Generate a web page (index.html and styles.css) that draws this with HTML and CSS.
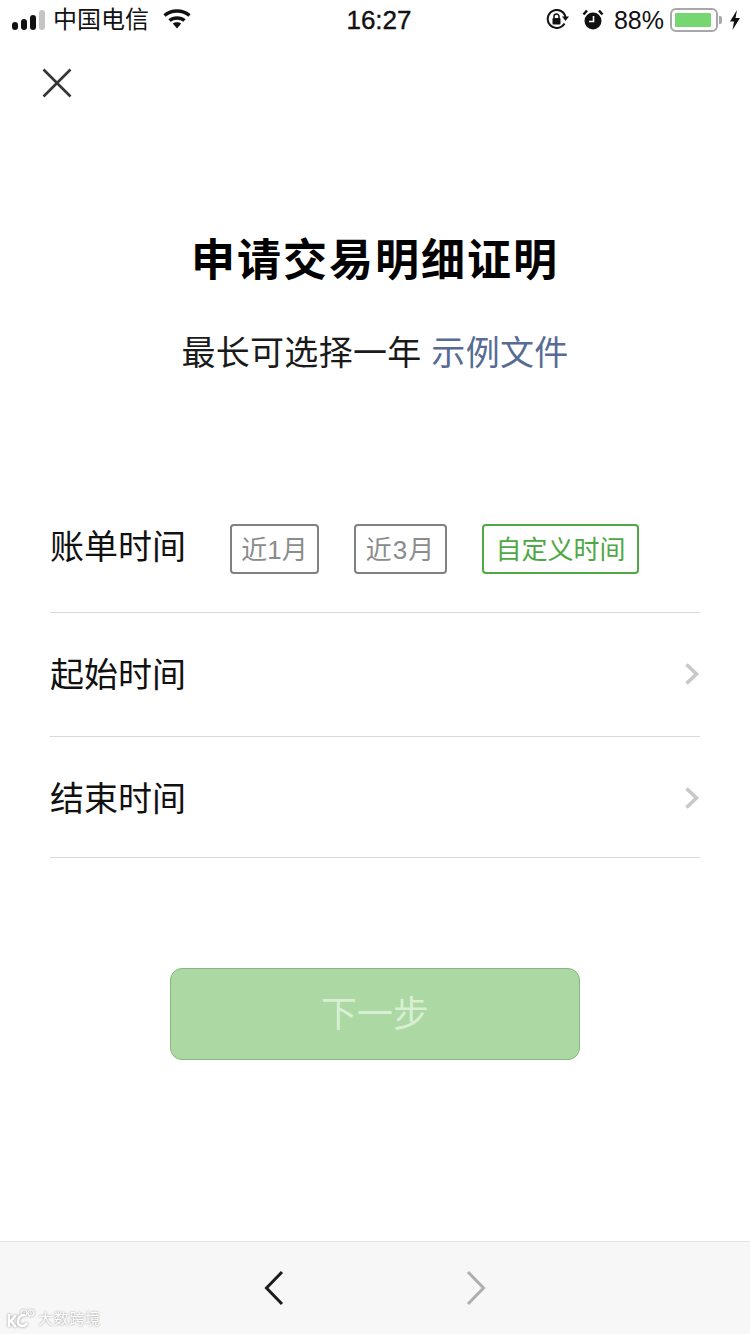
FILE: index.html
```html
<!DOCTYPE html>
<html lang="zh-CN">
<head>
<meta charset="utf-8">
<title>申请交易明细证明</title>
<link rel="stylesheet" href="styles.css">
</head>
<body>
<div class="page">
  <header class="status">
    <div class="status-side">
      <svg class="signal" width="34" height="20" viewBox="0 0 34 20"><rect x="0" y="12" width="6" height="8" rx="3" fill="#111"/><rect x="9" y="9" width="6" height="11" rx="3" fill="#111"/><rect x="18" y="5" width="6" height="15" rx="3" fill="#111"/><rect x="27" y="0" width="6" height="20" rx="3" fill="#c4c4c4"/></svg>
      <span class="carrier">中国电信</span>
      <svg class="wifi" width="28" height="20" viewBox="0 0 28 20"><path d="M1.5 6.5C8.500 .5 19.500 .5 26.500 6.500" fill="none" stroke="#111" stroke-width="3.500"/><path d="M6.500 11.500C10.500 8 17.500 8 21.500 11.500" fill="none" stroke="#111" stroke-width="3.500"/><path d="M9.800 14.500C12 12.800 16 12.800 18.200 14.500L14 19.500Z" fill="#111"/></svg>
    </div>
    <div class="clock">16:27</div>
    <div class="status-side status-right">
      <svg width="24" height="22" viewBox="0 0 24 22"><path d="M18.500 14.500A9 9 0 1 1 19.500 8" fill="none" stroke="#111" stroke-width="2"/><path d="M16 7.500h7l-3.500 4.500z" fill="#111"/><rect x="6.500" y="9" width="8" height="6.500" rx="1" fill="#111"/><path d="M8 9.500V7.500a2.500 2.500 0 0 1 5 0v2" fill="none" stroke="#111" stroke-width="1.500"/></svg>
      <svg class="alarm" width="22" height="22" viewBox="0 0 22 22"><circle cx="11" cy="12" r="8.500" fill="#111"/><path d="M1.500 5.500L5 1.500M20.500 5.500L17 1.500" stroke="#111" stroke-width="2.500" fill="none"/><path d="M11.500 7v5.500H7" stroke="#fff" stroke-width="1.600" fill="none"/></svg>
      <span class="percent">88%</span>
      <div class="battery"><div class="battery-fill"></div></div>
      <span class="battery-tip"></span>
      <svg class="bolt" width="12" height="20" viewBox="0 0 12 20"><path d="M8 0L1 11.500h4L3.500 20 11 8H6.500z" fill="#111"/></svg>
    </div>
  </header>

  <div class="topbar">
    <svg width="32" height="32" viewBox="0 0 32 32"><path d="M2.500 2.500L29.500 29.500M29.500 2.500L2.500 29.500" stroke="#353535" stroke-width="2.600" fill="none"/></svg>
  </div>

  <main class="content">
    <h1 class="title">申请交易明细证明</h1>
    <p class="subtitle">最长可选择一年 <span class="link">示例文件</span></p>

    <section class="form">
      <div class="row row-first">
        <span class="label">账单时间</span>
        <div class="tags">
          <span class="tag tag-one">近1月</span>
          <span class="tag tag-three">近3月</span>
          <span class="tag tag-active">自定义时间</span>
        </div>
      </div>
      <div class="row row-second">
        <span class="label">起始时间</span>
        <svg class="chevron" width="16" height="24" viewBox="0 0 16 24"><path d="M2.500 2.500L12.500 12 2.500 21.500" stroke="#c8c8c8" stroke-width="3.600" fill="none"/></svg>
      </div>
      <div class="row row-third">
        <span class="label">结束时间</span>
        <svg class="chevron" width="16" height="24" viewBox="0 0 16 24"><path d="M2.500 2.500L12.500 12 2.500 21.500" stroke="#c8c8c8" stroke-width="3.600" fill="none"/></svg>
      </div>
    </section>

    <button class="next" type="button">下一步</button>
  </main>

  <footer class="toolbar">
    <svg class="nav nav-back" width="20" height="36" viewBox="0 0 20 36"><path d="M18 2L2.500 18 18 34" stroke="#1c1c1c" stroke-width="3" fill="none"/></svg>
    <svg class="nav nav-forward" width="20" height="36" viewBox="0 0 20 36"><path d="M2 2L17.500 18 2 34" stroke="#aeaeae" stroke-width="3" fill="none"/></svg>
    <div class="watermark">
      <svg width="28" height="20" viewBox="0 0 28 20"><path d="M2 5v13M9 6L4 12l5 6M18 6c-4 0-7 2-7 7 0 4 6 6 9 1" fill="none" stroke="#fff" stroke-width="2.600"/><circle cx="17" cy="4" r="3" fill="none" stroke="#fff" stroke-width="1.200"/><circle cx="24" cy="4" r="3" fill="none" stroke="#fff" stroke-width="1.200"/></svg>
      <span>大数跨境</span>
    </div>
  </footer>
</div>
</body>
</html>
```
FILE: styles.css
```css
* { box-sizing: border-box; }
html, body { margin: 0; padding: 0; background: #fff; }
body { font-family: "Liberation Sans", "Noto Sans CJK SC", sans-serif; color: #000; }
.page { width: 750px; height: 1334px; display: flex; flex-direction: column; overflow: hidden; }

.status { height: 40px; display: grid; grid-template-columns: 1fr auto 1fr; align-items: center; color: #111; }
.status-side { display: flex; align-items: center; }
.signal { margin-left: 12px; }
.carrier { margin-left: 7px; font-size: 24px; line-height: 40px; }
.wifi { margin-left: 14px; margin-top: -2px; }
.clock { padding-left: 8px; font-size: 26px; font-weight: 500; line-height: 40px; -webkit-text-stroke: .4px #111; }
.status-right { justify-content: flex-end; padding-right: 9px; }
.alarm { margin-left: 12px; }
.percent { margin-left: 10px; font-size: 25px; line-height: 40px; }
.battery { margin-left: 6px; width: 48px; height: 24px; padding: 3px; border: 2px solid #a8a8a8; border-radius: 6px; }
.battery-fill { width: 36px; height: 14px; background: #76d672; border-radius: 1px; }
.battery-tip { width: 3px; height: 8px; margin-left: 1px; background: #a8a8a8; border-radius: 0 2px 2px 0; }
.bolt { margin-left: 7px; }

.topbar { height: 60px; padding: 27px 0 0 41px; }

.content { flex: 1; display: flex; flex-direction: column; align-items: center; }
.title { margin: 128px 0 0; font-size: 44px; line-height: 65px; font-weight: 700; letter-spacing: 2px; color: #000; }
.subtitle { margin: 36px 0 0; font-size: 34px; line-height: 48px; letter-spacing: .3px; color: #1a1a1a; }
.link { color: #576b95; }

.form { width: 650px; margin-top: 139px; }
.row { display: flex; align-items: center; justify-content: space-between; border-bottom: 1px solid #d9d9d9; }
.row-first { height: 97px; padding-bottom: 30px; justify-content: flex-start; }
.row-first .label { margin-bottom: 4px; }
.row-second { height: 124px; }
.row-third { height: 121px; padding-top: 4px; }
.label { font-size: 34px; line-height: 48px; color: #111; }
.tags { display: flex; margin-left: 44px; }
.tag { height: 50px; display: flex; align-items: center; justify-content: center; padding-bottom: 4px; border: 2px solid #808080; border-radius: 4px; font-size: 26px; color: #8c8c8c; }
.tag-one { width: 89px; }
.tag-three { width: 93px; margin-left: 35px; letter-spacing: 1px; }
.tag-active { width: 157px; margin-left: 35px; border-color: #4ea844; color: #4ea844; }
.chevron { margin-bottom: 2px; }

.next { width: 410px; height: 92px; margin-top: 110px; padding: 0 0 6px; background: #acd8a4; border: 1px solid #86b780; border-radius: 12px; font-family: inherit; font-size: 36px; color: #d8efd3; }

.toolbar { position: relative; height: 93px; display: flex; justify-content: center; align-items: center; gap: 182px; background: #f7f7f7; border-top: 1px solid #e4e4e4; }
.watermark { position: absolute; left: 7px; bottom: 5px; display: flex; align-items: center; gap: 3px; font-size: 15px; line-height: 20px; letter-spacing: .7px; color: #fff; text-shadow: 0 0 2px #8a8a8a; }
.watermark svg { filter: drop-shadow(0 0 1px #8a8a8a); }
```
